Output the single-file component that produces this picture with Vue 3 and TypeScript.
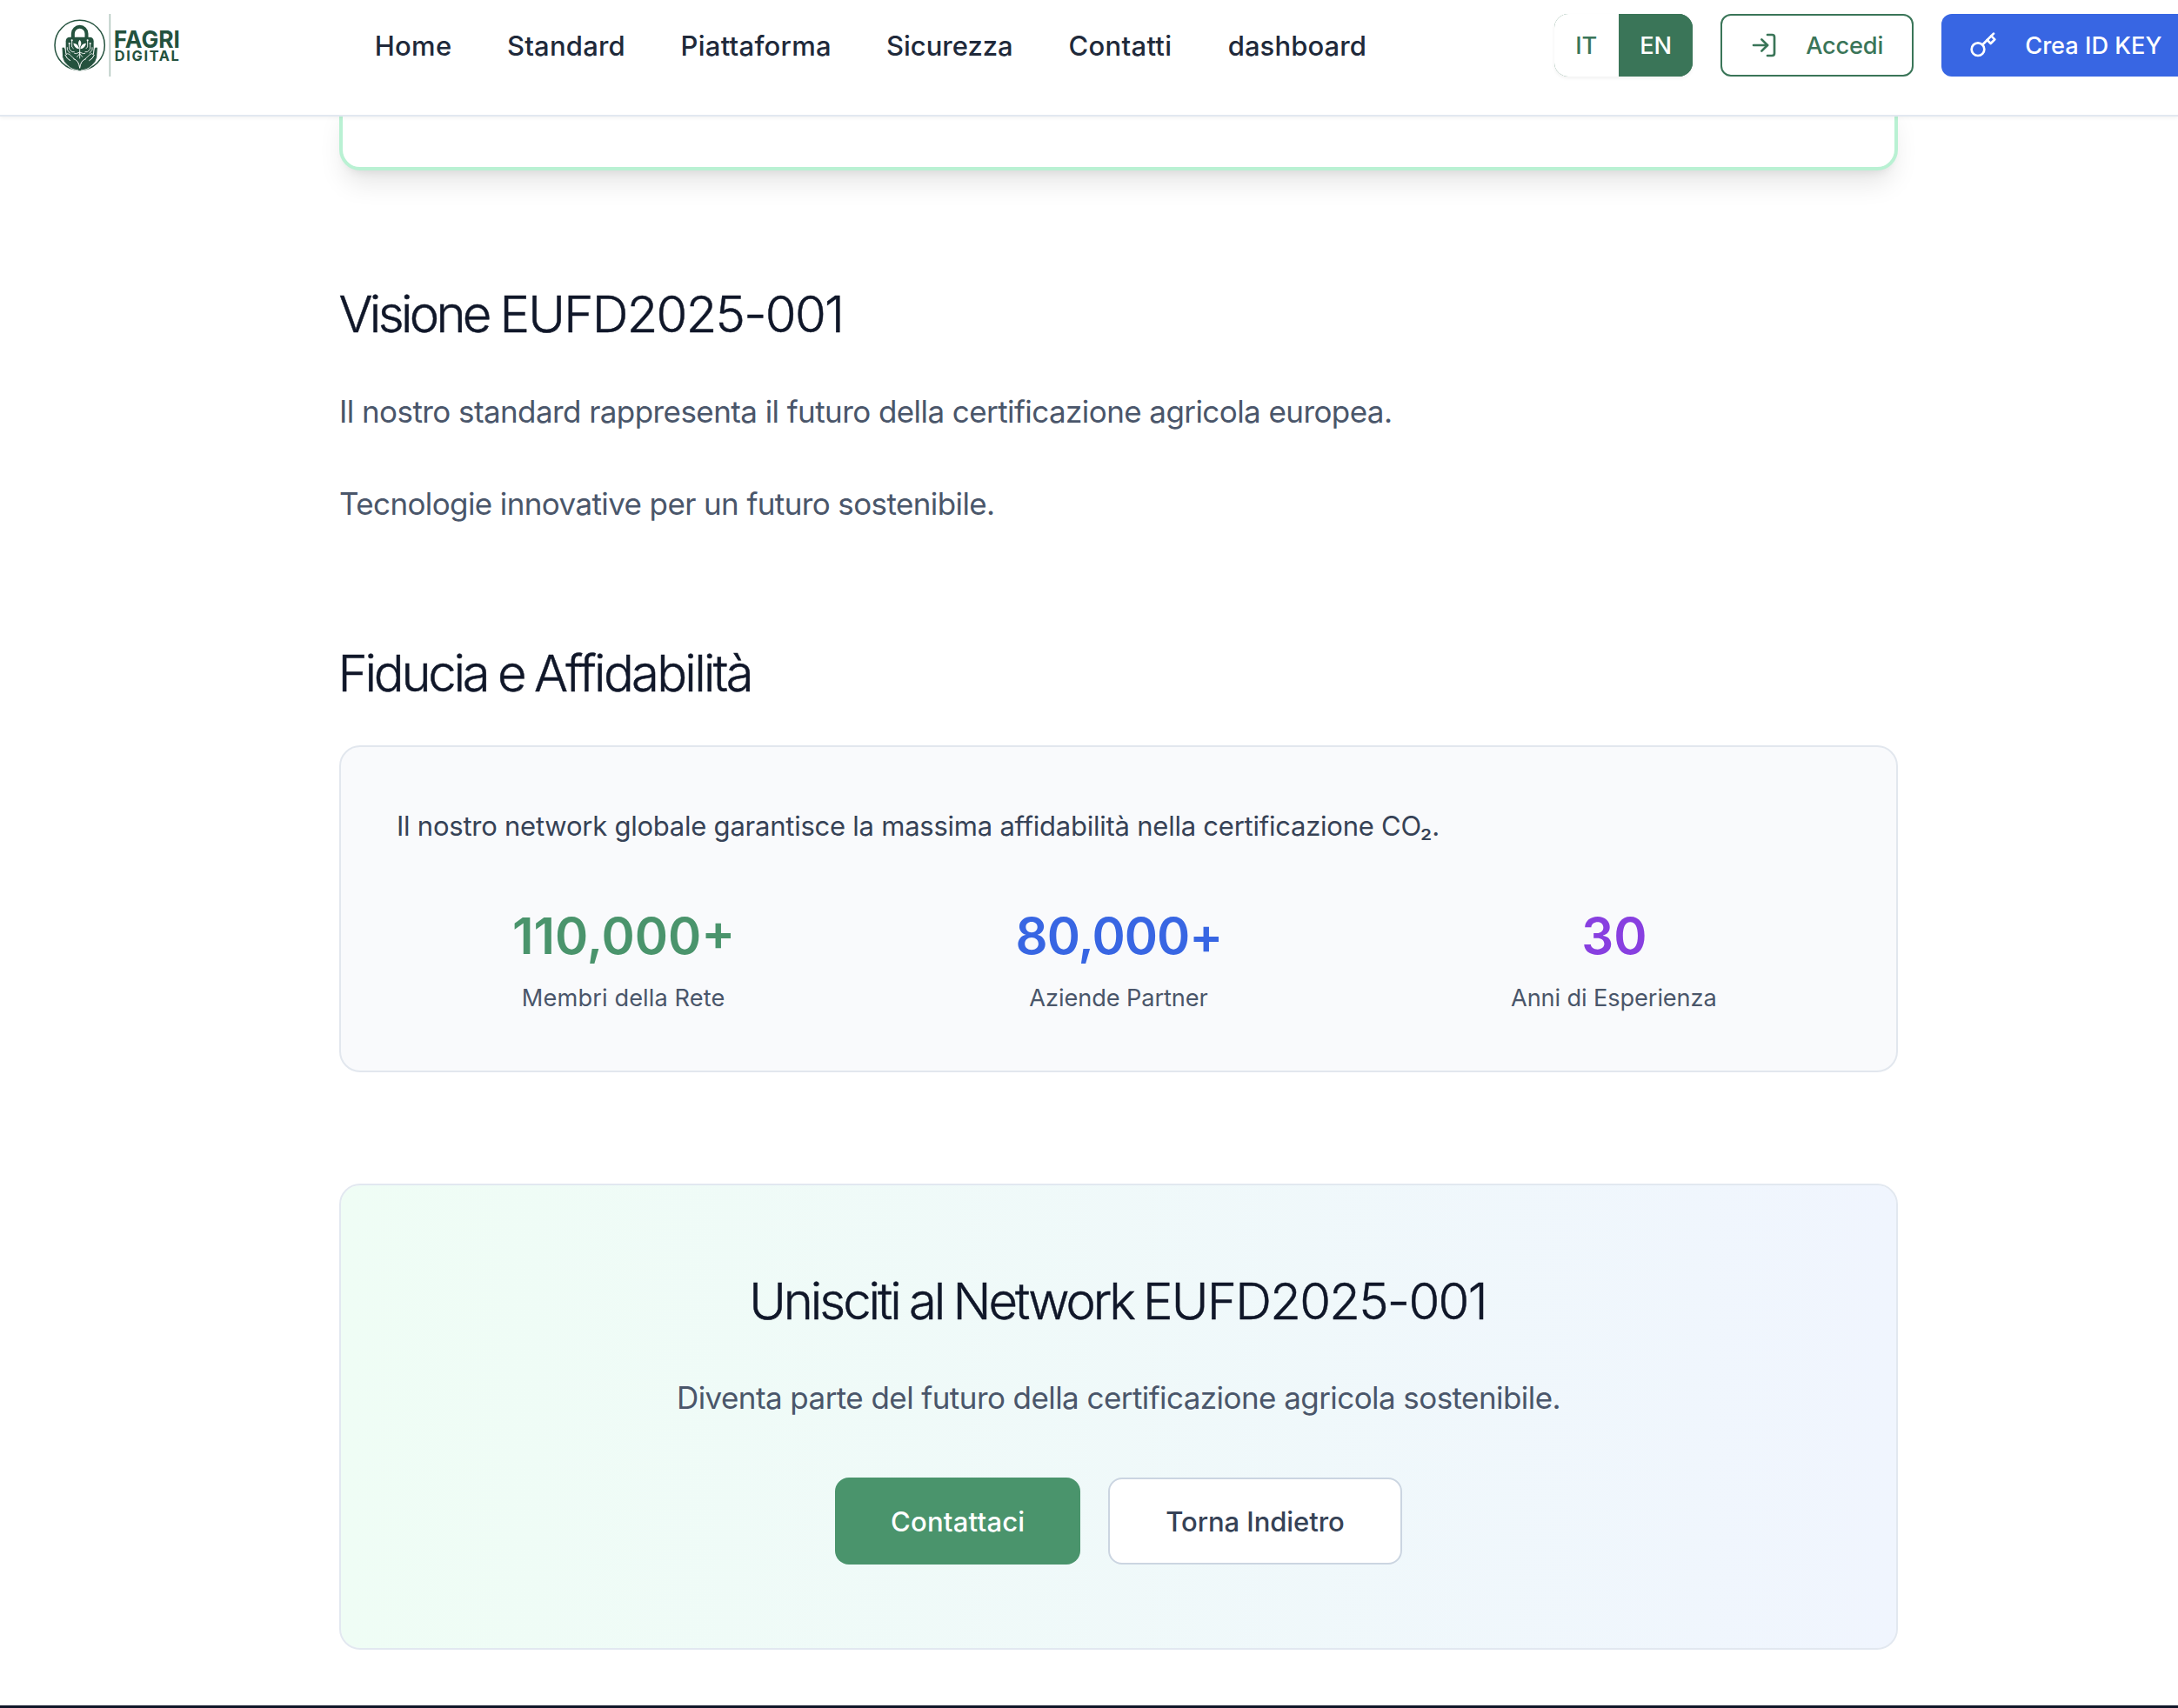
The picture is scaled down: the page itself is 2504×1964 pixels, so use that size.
<script setup lang="ts">
interface NavItem { id: string; label: string }
interface Stat { id: string; value: string; label: string }

const navItems: NavItem[] = [
  { id: 'home', label: 'Home' },
  { id: 'standard', label: 'Standard' },
  { id: 'piattaforma', label: 'Piattaforma' },
  { id: 'sicurezza', label: 'Sicurezza' },
  { id: 'contatti', label: 'Contatti' },
  { id: 'dashboard', label: 'dashboard' },
]

const stats: Stat[] = [
  { id: 'members', value: '110,000+', label: 'Membri della Rete' },
  { id: 'partners', value: '80,000+', label: 'Aziende Partner' },
  { id: 'years', value: '30', label: 'Anni di Esperienza' },
]
</script>

<template>
  <div class="page">
    <header class="header">
      <svg class="logo" viewBox="60 48 450 216" role="img" aria-label="Fagri Digital">
        <circle cx="155" cy="156" r="86" fill="none" stroke="#24523e" stroke-width="4.5" />
        <!-- padlock -->
        <path d="M131.500 134V116a23.500 23.500 0 0 1 47 0v18" fill="none" stroke="#24523e" stroke-width="12" />
        <path d="M121 128h68q14 0 14 14v32q0 12-8 20l-22 20h-36l-22-20q-8-8-8-20v-32q0-14 14-14z" fill="#24523e" />
        <!-- hands -->
        <g fill="#24523e" stroke="#fff" stroke-width="2.500" stroke-linejoin="round">
          <path d="M93 164q8-6 12 4l3 20q5-6 12 0l18 17q13 12 17 38q-26-1-41-16q-17-14-19-30z" />
          <path d="M217 164q-8-6-12 4l-3 20q-5-6-12 0l-18 17q-13 12-17 38q26-1 41-16q17-14 19-30z" />
        </g>
        <path d="M133 202q12 2 22 10q10-8 22-10q-6 12-14 21l-4 20h-8l-4-20q-8-9-14-21z" fill="#24523e" />
        <path d="M105 190q5 13 17 19M205 190q-5 13-17 19M134 203q18 5 21 32q3-27 21-32" fill="none" stroke="#fff" stroke-width="3" stroke-linecap="round" />
        <!-- sprout and roots -->
        <g fill="#fff">
          <path d="M155 137q10 12 0 26q-10-14 0-26z" />
          <path d="M133 149q17 0 20 20q-17-2-20-20zM177 149q-17 0-20 20q17-2 20-20z" />
        </g>
        <g fill="none" stroke="#fff" stroke-width="2.600" stroke-linecap="round">
          <path d="M155 160v41M155 180l-12 5-6-1M155 180l12 5 6-1M155 185l-9 11M155 185l9 11" />
          <path d="M119 151v19l10 9h7M128 140v22l5 5M112 164v8l9 11M191 151v19l-10 9h-7M182 140v22l-5 5M198 164v8l-9 11" />
        </g>
        <g fill="#fff">
          <circle cx="119" cy="150" r="3.200" /><circle cx="128" cy="139" r="3.200" />
          <circle cx="191" cy="150" r="3.200" /><circle cx="182" cy="139" r="3.200" />
        </g>
        <rect x="256.500" y="48" width="5" height="216" fill="#b4c8bf" />
        <text class="logo-text" x="272" y="164" font-size="82" textLength="229" lengthAdjust="spacingAndGlyphs">FAGRI</text>
        <text class="logo-text logo-sub" x="275.500" y="209" font-size="49" textLength="222" lengthAdjust="spacing">DIGITAL</text>
      </svg>

      <nav class="nav">
        <a v-for="item in navItems" :key="item.id" class="nav-link" :class="`nav-${item.id}`">{{ item.label }}</a>
      </nav>

      <div class="actions">
        <div class="lang">
          <button class="lang-btn lang-it">IT</button>
          <button class="lang-btn lang-en">EN</button>
        </div>
        <button class="btn btn-login">
          <svg class="icon" viewBox="0 0 24 24">
            <path d="M15 3h4a2 2 0 0 1 2 2v14a2 2 0 0 1-2 2h-4" />
            <path d="m10 17 5-5-5-5" />
            <path d="M15 12H3" />
          </svg>
          <span>Accedi</span>
        </button>
        <button class="btn btn-key">
          <svg class="icon" viewBox="0 0 24 24">
            <path d="m15.500 7.500 3 3L22 7l-3-3" />
            <path d="m21 2-9.600 9.600" />
            <circle cx="7.500" cy="15.500" r="5.500" />
          </svg>
          <span>Crea ID KEY</span>
        </button>
      </div>
    </header>

    <main class="content">
      <div class="highlight-card"></div>

      <section class="vision">
        <h2 class="title title-vision">Visione <span class="code">EUFD2025-001</span></h2>
        <p class="lead lead-first">Il nostro standard rappresenta il futuro della certificazione agricola europea.</p>
        <p class="lead lead-second">Tecnologie innovative per un futuro sostenibile.</p>
      </section>

      <section class="trust">
        <h2 class="title title-trust">Fiducia e <span class="wide">Affidabilità</span></h2>
        <div class="trust-card">
          <p class="trust-text">Il nostro network globale garantisce la massima affidabilità nella certificazione CO₂.</p>
          <div class="stats">
            <div v-for="stat in stats" :key="stat.id" class="stat" :class="`stat-${stat.id}`">
              <div class="stat-value">{{ stat.value }}</div>
              <div class="stat-label">{{ stat.label }}</div>
            </div>
          </div>
        </div>
      </section>

      <section class="cta">
        <h2 class="title title-cta">Unisciti al Network <span class="code">EUFD2025-001</span></h2>
        <p class="lead lead-cta">Diventa parte del futuro della certificazione agricola sostenibile.</p>
        <div class="cta-buttons">
          <button class="cta-btn cta-primary">Contattaci</button>
          <button class="cta-btn cta-secondary">Torna Indietro</button>
        </div>
      </section>
    </main>

    <footer class="footer"></footer>
  </div>
</template>

<style>
body {
  margin: 0;
  background: #fff;
  overflow: hidden;
}
</style>

<style scoped>
.page {
  width: 2504px;
  height: 1964px;
  overflow: hidden;
  background: #fff;
  font-family: Inter, 'Noto Sans', sans-serif;
  display: flex;
  flex-direction: column;
}

.page * {
  box-sizing: border-box;
}

h2,
p {
  margin: 0;
}

button {
  font: inherit;
  border: 0;
  margin: 0;
}

.header {
  flex: none;
  position: relative;
  z-index: 1;
  height: 134px;
  padding: 16px 0 0 60px;
  display: flex;
  align-items: flex-start;
  background: #fff;
  border-bottom: 2px solid #e2e8f0;
  box-shadow: 0 2px 4px rgba(0, 0, 0, 0.05);
}

.logo {
  flex: none;
  width: 150px;
  height: 72px;
}

.logo-text {
  font-family: Inter, sans-serif;
  font-weight: 700;
  fill: #24523e;
}

.logo-sub {
  font-weight: 650;
}

.nav {
  flex: none;
  width: 1356px;
  height: 72px;
  margin-left: 220.700px;
  padding-top: 1px;
  display: flex;
  align-items: center;
  gap: 64px;
  font-size: 31px;
  font-weight: 500;
  line-height: 37px;
  color: #20293a;
}

.nav-link {
  flex: none;
  white-space: nowrap;
}

.nav-home { width: 88.300px; letter-spacing: 0.300px; }
.nav-standard { width: 135.600px; letter-spacing: 0.200px; }
.nav-piattaforma { width: 172.400px; letter-spacing: 0.250px; }
.nav-sicurezza { width: 145.500px; letter-spacing: 0; }
.nav-contatti { width: 119.200px; letter-spacing: 0.300px; }
.nav-dashboard { letter-spacing: 0.100px; }

.actions {
  flex: none;
  display: flex;
  gap: 32px;
  font-size: 27.200px;
  font-weight: 500;
  line-height: 33px;
}

.lang {
  width: 159px;
  height: 72px;
  display: flex;
  overflow: hidden;
  border-radius: 16px;
  background: #3a7558;
  box-shadow: 0 2px 4px rgba(0, 0, 0, 0.06);
}

.lang-btn {
  padding: 1px 0 0 24.500px;
  text-align: left;
}

.lang-it {
  width: 74px;
  background: #fff;
  color: #3a7558;
}

.lang-en {
  width: 85px;
  background: #3a7558;
  color: #fff;
}

.btn {
  height: 72px;
  display: flex;
  align-items: center;
  gap: 32px;
  border-radius: 12px;
  white-space: nowrap;
}

.btn span {
  padding: 1px 0 0 0.500px;
}

.btn-login {
  width: 222px;
  padding: 0 0 0 32px;
  border: 2px solid #3a7558;
  background: #fff;
  color: #3a7558;
  letter-spacing: -0.200px;
}

.btn-key {
  width: 286px;
  padding: 0 0 0 32px;
  background: #3866e3;
  color: #fff;
}

.icon {
  flex: none;
  width: 32px;
  height: 32px;
  fill: none;
  stroke: currentColor;
  stroke-width: 2;
  stroke-linecap: round;
  stroke-linejoin: round;
}

.content {
  flex: none;
  width: 1792px;
  margin-left: 390px;
}

.highlight-card {
  height: 86px;
  margin-top: -24px;
  border: 4px solid #b9f1d3;
  border-radius: 24px;
  background: #fff;
  box-shadow: 0 20px 30px -6px rgba(0, 0, 0, 0.1), 0 8px 12px -8px rgba(0, 0, 0, 0.1);
}

.title {
  font-size: 58px;
  line-height: 72px;
  font-weight: 350;
  color: #101729;
  white-space: nowrap;
  -webkit-text-stroke: 0.500px #101729;
}

.title-vision { letter-spacing: -3.700px; margin-left: -0.500px; }
.title-trust { letter-spacing: -3.230px; word-spacing: -1.500px; margin-left: -1.500px; }
.title-cta { letter-spacing: -3.070px; word-spacing: -2px; padding-right: 2px; }

.code {
  letter-spacing: -1.700px;
}

.wide {
  letter-spacing: -2.750px;
}

.lead {
  font-size: 35px;
  line-height: 58px;
  color: #4a566a;
  white-space: nowrap;
}

.lead-first { letter-spacing: -0.575px; margin-top: 47px; }
.lead-second { letter-spacing: -0.610px; margin-top: 48px; }
.lead-cta { letter-spacing: -0.567px; margin-top: 46px; }

.vision {
  margin-top: 129px;
}

.trust {
  margin-top: 130px;
}

.trust-card {
  height: 376px;
  margin-top: 47px;
  padding: 64px;
  border: 2px solid #e2e7ee;
  border-radius: 24px;
  background: #f9fafc;
}

.trust-text {
  font-size: 31px;
  line-height: 53px;
  letter-spacing: -0.238px;
  color: #364256;
  white-space: nowrap;
}

.stats {
  margin-top: 64px;
  display: grid;
  grid-template-columns: repeat(3, 1fr);
  column-gap: 48px;
  text-align: center;
}

.stat-value {
  font-size: 58px;
  line-height: 72px;
  font-weight: 600;
  padding-left: 1px;
}

.stat-label {
  margin-top: 16px;
  font-size: 27.200px;
  line-height: 39px;
  color: #4a566a;
}

.stat-members .stat-value { color: #4a946c; }
.stat-members .stat-label { letter-spacing: 0.110px; }
.stat-partners .stat-value { color: #3866e3; letter-spacing: -0.940px; }
.stat-partners .stat-label { letter-spacing: -0.100px; }
.stat-years .stat-value { color: #883fe0; }
.stat-years .stat-label { letter-spacing: -0.115px; }

.cta {
  height: 536px;
  margin-top: 128px;
  padding-top: 97px;
  border: 2px solid #e2e8f0;
  border-radius: 24px;
  background: linear-gradient(to right, #effdf5, #f0f5fe);
  background-clip: padding-box;
  text-align: center;
}

.cta-buttons {
  margin-top: 63px;
  display: flex;
  justify-content: center;
  gap: 32px;
}

.cta-btn {
  height: 100px;
  padding: 1px 0 0;
  border-radius: 16px;
  font-size: 31px;
  font-weight: 500;
  line-height: 37px;
  white-space: nowrap;
}

.cta-primary {
  width: 282px;
  background: #4a946c;
  color: #fff;
  letter-spacing: 0.220px;
}

.cta-secondary {
  width: 337.600px;
  border: 2px solid #cbd5e1;
  background: #fff;
  color: #364256;
  letter-spacing: -0.070px;
}

.footer {
  flex: none;
  height: 40px;
  margin-top: 64px;
  background: #101729;
}
</style>
